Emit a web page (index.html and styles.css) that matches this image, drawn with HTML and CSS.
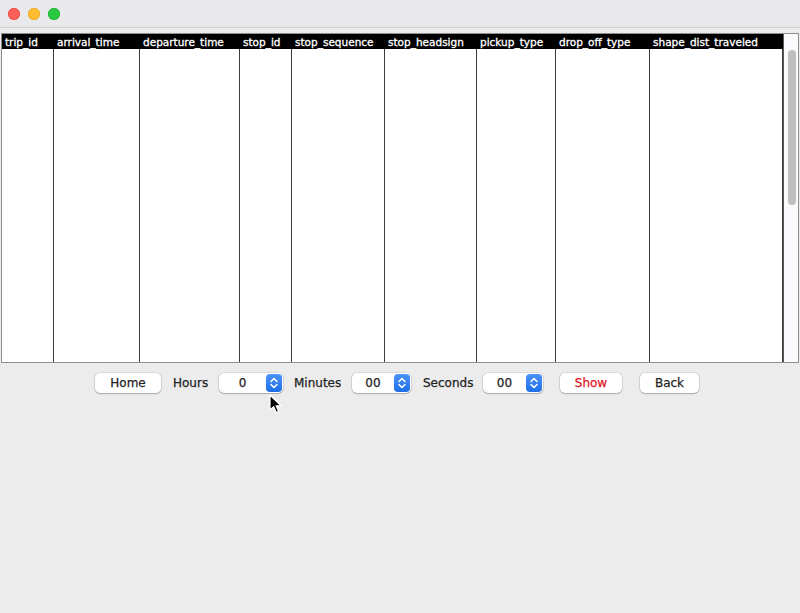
FILE: index.html
```html
<!DOCTYPE html>
<html>
<head>
<meta charset="utf-8">
<link rel="stylesheet" href="styles.css">
</head>
<body>
<div class="window">
  <div class="titlebar">
    <span class="light red"></span>
    <span class="light yellow"></span>
    <span class="light green"></span>
  </div>
  <div class="pane">
    <div class="table">
      <div class="col c1"><div class="th">trip_id</div><div class="td"></div></div>
      <div class="col c2"><div class="th">arrival_time</div><div class="td"></div></div>
      <div class="col c3"><div class="th">departure_time</div><div class="td"></div></div>
      <div class="col c4"><div class="th">stop_id</div><div class="td"></div></div>
      <div class="col c5"><div class="th">stop_sequence</div><div class="td"></div></div>
      <div class="col c6"><div class="th">stop_headsign</div><div class="td"></div></div>
      <div class="col c7"><div class="th">pickup_type</div><div class="td"></div></div>
      <div class="col c8"><div class="th">drop_off_type</div><div class="td"></div></div>
      <div class="col c9"><div class="th">shape_dist_traveled</div><div class="td"></div></div>
    </div>
    <div class="scrollbar"><div class="thumb"></div></div>
  </div>
  <div class="controls">
    <button class="btn home">Home</button>
    <span class="label l-hours">Hours</span>
    <div class="spinner s1"><span class="val">0</span><span class="stepper"><svg width="16" height="18" viewBox="0 0 16 18"><path d="M5 7.5 L8 4.5 L11 7.5 M5 10.5 L8 13.5 L11 10.5" fill="none" stroke="#fff" stroke-width="1.5" stroke-linecap="round" stroke-linejoin="round"/></svg></span></div>
    <span class="label l-min">Minutes</span>
    <div class="spinner s2"><span class="val">00</span><span class="stepper"><svg width="16" height="18" viewBox="0 0 16 18"><path d="M5 7.5 L8 4.5 L11 7.5 M5 10.5 L8 13.5 L11 10.5" fill="none" stroke="#fff" stroke-width="1.5" stroke-linecap="round" stroke-linejoin="round"/></svg></span></div>
    <span class="label l-sec">Seconds</span>
    <div class="spinner s3"><span class="val">00</span><span class="stepper"><svg width="16" height="18" viewBox="0 0 16 18"><path d="M5 7.5 L8 4.5 L11 7.5 M5 10.5 L8 13.5 L11 10.5" fill="none" stroke="#fff" stroke-width="1.5" stroke-linecap="round" stroke-linejoin="round"/></svg></span></div>
    <button class="btn show">Show</button>
    <button class="btn back">Back</button>
  </div>
  <svg class="cursor" width="13" height="20" viewBox="0 0 13 20"><path d="M1 1 L1 16 L4.6 12.6 L7.2 18.6 L9.6 17.6 L7.1 11.8 L12 11.8 Z" fill="#000" stroke="#fff" stroke-width="1.2" stroke-linejoin="round"/></svg>
</div>
</body>
</html>
```

FILE: styles.css
```css
* { box-sizing: border-box; }
html, body {
  margin: 0;
  padding: 0;
  width: 800px;
  height: 613px;
  overflow: hidden;
  background: #ececec;
  font-family: "DejaVu Sans", "Liberation Sans", sans-serif;
  font-size: 12px;
  color: #222;
}
.window {
  position: relative;
  width: 800px;
  height: 613px;
}
.titlebar {
  height: 28px;
  background: #e9e8ea;
  border-bottom: 1px solid #d2d2d2;
  display: flex;
  align-items: flex-start;
  padding: 8px 0 0 8px;
  gap: 8px;
}
.light {
  width: 12px;
  height: 12px;
  border-radius: 50%;
  display: block;
}
.red { background: #fe5f57; box-shadow: inset 0 0 0 0.5px #e0443e; }
.yellow { background: #febc2e; box-shadow: inset 0 0 0 0.5px #dea123; }
.green { background: #28c840; box-shadow: inset 0 0 0 0.5px #1aab29; }

.pane {
  margin: 5px 1px 0 1px;
  height: 330px;
  border: 1px solid #8e8e8e;
  background: #fff;
  display: flex;
}
.table {
  width: 781px;
  display: flex;
}
.col {
  display: flex;
  flex-direction: column;
}
.th {
  height: 15px;
  background: #000;
  color: #fff;
  font-size: 10.5px;
  line-height: 16px;
  padding-left: 3px;
  white-space: nowrap;
  overflow: hidden;
  -webkit-text-stroke: 0.3px #fff;
}
.td {
  flex: 1;
  background: #fff;
  border-right: 1px solid #3c3c3c;
}
.c1 { width: 52px; }
.c2 { width: 86px; }
.c3 { width: 100px; }
.c4 { width: 52px; }
.c5 { width: 93px; }
.c6 { width: 92px; }
.c7 { width: 79px; }
.c8 { width: 94px; }
.c9 { width: 133px; }

.scrollbar {
  width: 15px;
  border-left: 1px solid #5a5a5a;
  background: #faf9fb;
  padding: 16px 0 0 3.5px;
}
.thumb {
  width: 8px;
  height: 155px;
  border-radius: 4px;
  background: #bebebe;
}

.controls {
  display: flex;
  align-items: center;
  height: 20px;
  margin-top: 10px;
  padding-left: 95px;
  gap: 11px;
}
.btn {
  height: 20px;
  padding: 0;
  border: none;
  border-radius: 5px;
  background: #fff;
  font-family: "DejaVu Sans", "Liberation Sans", sans-serif;
  font-size: 12px;
  color: #1e1e1e;
  box-shadow: 0 0 0 0.5px rgba(0,0,0,0.16), 0 1px 1.5px rgba(0,0,0,0.22);
  text-align: center;
  line-height: 20px;
  -webkit-text-stroke: 0.25px currentColor;
}
.home { width: 66px; }
.show { width: 62px; color: #e0141b; margin-left: 6px; }
.back { width: 59px; margin-left: 7px; }
.label {
  white-space: nowrap;
  color: #222;
  -webkit-text-stroke: 0.25px #222;
}
.l-hours { width: 35px; margin-left: 1px; }
.l-min { width: 47px; }
.l-sec { width: 49px; margin-left: 1px; }
.spinner {
  height: 20px;
  background: #fff;
  border-radius: 5px;
  box-shadow: 0 0 0 0.5px rgba(0,0,0,0.16), 0 1px 1.5px rgba(0,0,0,0.22);
  display: flex;
  align-items: center;
  padding: 1px 1px 1px 0;
}
.s1 { width: 64px; }
.s2 { width: 59px; }
.s3 { width: 60px; }
.val {
  flex: 1;
  text-align: center;
  color: #1e1e1e;
  -webkit-text-stroke: 0.25px #1e1e1e;
}
.stepper {
  width: 16px;
  height: 18px;
  border-radius: 4px;
  background: linear-gradient(#4b93f9, #1d6fe9);
  display: flex;
}
.cursor {
  position: absolute;
  left: 269px;
  top: 394px;
}
```
